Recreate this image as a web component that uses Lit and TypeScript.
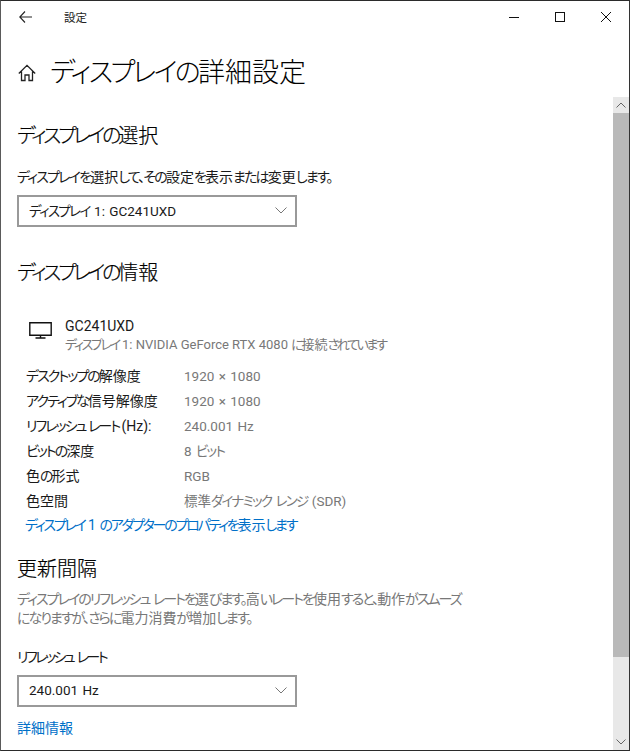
import { LitElement, css, html } from "lit";
import { customElement } from "lit/decorators.js";

const infoRows = [
  ["デスクトップの解像度", "1920 × 1080"],
  ["アクティブな信号解像度", "1920 × 1080"],
  ["リフレッシュ レート (Hz):", "240.001 Hz"],
  ["ビットの深度", "8 ビット"],
  ["色の形式", "RGB"],
  ["色空間", "標準ダイナミック レンジ (SDR)"],
];

// Yu Gothic UI has much narrower kana than Noto, so kana runs get tightened on their own
const jp = (text: string) =>
  text.split(/([\u3000-\u30ff]+)/).map((part, i) => (i % 2 ? html`<span class="k">${part}</span>` : part));

const chevron = html`<svg class="chev" width="12" height="7" viewBox="0 0 12 7">
  <path d="M.5.5 6 6 11.500.5" fill="none" stroke="#777" stroke-width="1" />
</svg>`;

@customElement("app-root")
export class AppRoot extends LitElement {
  override render() {
    return html`
      <div class="window">
        <header class="titlebar">
          <svg class="back" width="13" height="12" viewBox="0 0 13 12">
            <path d="M6 .5.8 6 6 11.500M.8 6H13" fill="none" stroke="#222" stroke-width="1.100" />
          </svg>
          <span class="app-name">設定</span>
          <div class="controls">
            <svg width="46" height="12" viewBox="0 0 46 12"><path d="M18 6.500h10" stroke="#111" stroke-width="1" /></svg>
            <svg width="46" height="12" viewBox="0 0 46 12"><rect x="18.500" y="1.500" width="9" height="9" fill="none" stroke="#111" stroke-width="1" /></svg>
            <svg width="46" height="12" viewBox="0 0 46 12"><path d="M18 1l10 10M28 1 18 11" stroke="#111" stroke-width="1" /></svg>
          </div>
        </header>

        <div class="body">
          <main class="content">
            <div class="page-title">
              <svg width="18" height="18" viewBox="0 0 18 18">
                <path d="M.8 9.500 9 1.300l8.200 8.200M3.500 7.500V16.500H7V11h4v5.500h3.500V7.500" fill="none" stroke="#222" stroke-width="1.300" />
              </svg>
              <h1>${jp("ディスプレイの詳細設定")}</h1>
            </div>

            <h2 class="first">${jp("ディスプレイの選択")}</h2>
            <p class="label">${jp("ディスプレイを選択して、その設定を表示または変更します。")}</p>
            <div class="select"><span>${jp("ディスプレイ 1: GC241UXD")}</span>${chevron}</div>

            <h2 class="info-head">${jp("ディスプレイの情報")}</h2>
            <div class="monitor">
              <svg width="23" height="17" viewBox="0 0 23 17">
                <path d="M.8.8h21.400v12.400H.8zM11.500 13.200v2.800M6.500 16h10" fill="none" stroke="#111" stroke-width="1.400" />
              </svg>
              <div>
                <div class="mon-name">GC241UXD</div>
                <div class="mon-sub">${jp("ディスプレイ 1: NVIDIA GeForce RTX 4080 に接続されています")}</div>
              </div>
            </div>
            <div class="rows">
              ${infoRows.map(
                ([k, v]) => html`<div class="row"><span class="key">${jp(k)}</span><span class="val">${jp(v)}</span></div>`,
              )}
            </div>
            <a class="link adapter">${jp("ディスプレイ 1 のアダプターのプロパティを表示します")}</a>

            <h2 class="rate-head">更新間隔</h2>
            <p class="desc">
              ${jp("ディスプレイのリフレッシュ レートを選びます。高いレートを使用すると、動作がスムーズ")}<br />
              ${jp("になりますが、さらに電力消費が増加します。")}
            </p>
            <p class="label rate-label">${jp("リフレッシュ レート")}</p>
            <div class="select"><span>240.001 Hz</span>${chevron}</div>
            <a class="link more">詳細情報</a>
          </main>

          <aside class="scrollbar">
            <div class="arrow">
              <svg width="10" height="6" viewBox="0 0 10 6"><path d="M.5 5.500 5 1l4.500 4.500" fill="none" stroke="#666" /></svg>
            </div>
            <div class="thumb"></div>
            <div class="track"></div>
            <div class="arrow">
              <svg width="10" height="6" viewBox="0 0 10 6"><path d="M.5.500 5 5 9.500.5" fill="none" stroke="#666" /></svg>
            </div>
          </aside>
        </div>
      </div>
    `;
  }

  static override styles = css`
    :host {
      display: block;
      width: 630px;
      height: 751px;
      font-family: Roboto, "Noto Sans CJK JP", sans-serif;
      font-feature-settings: "palt";
      font-size: 14px;
      color: #1a1a1a;
    }

    .k {
      letter-spacing: -0.13em;
    }

    .window {
      box-sizing: border-box;
      width: 630px;
      height: 751px;
      background: #fff;
      border-top: 1px solid #2b2b2b;
      border-left: 1px solid #5a5a5a;
      border-right: 1px solid #333;
      border-bottom: 1px solid #2b2b2b;
      display: flex;
      flex-direction: column;
      overflow: hidden;
    }

    .titlebar {
      flex: none;
      height: 32px;
      display: flex;
      align-items: center;
      padding-left: 18px;
    }

    .app-name {
      margin-left: 32px;
      font-size: 11.500px;
      color: #222;
    }

    .controls {
      margin-left: auto;
      display: flex;
    }

    .controls svg {
      display: block;
    }

    .body {
      flex: 1;
      min-height: 0;
      display: flex;
    }

    .content {
      flex: 1;
      min-width: 0;
      padding-left: 16px;
      overflow: hidden;
    }

    .page-title {
      display: flex;
      align-items: center;
      gap: 14px;
      margin-top: 22px;
      margin-left: 1px;
      height: 36px;
    }

    h1 {
      margin: 0;
      font-size: 27px;
      font-weight: 300;
      line-height: 36px;
      white-space: nowrap;
      color: #000;
    }

    h1 .k {
      letter-spacing: -0.1em;
    }

    h2 {
      margin: 0;
      font-size: 20px;
      font-weight: 300;
      line-height: 26px;
      color: #000;
      -webkit-text-stroke: 0.2px #000;
    }

    h2 .k {
      letter-spacing: -0.16em;
    }

    h2.first {
      margin-top: 32px;
    }

    .label {
      margin: 19px 0 0;
      line-height: 18px;
      white-space: nowrap;
    }

    .select {
      box-sizing: border-box;
      width: 280px;
      height: 32px;
      margin-top: 9px;
      border: 2px solid #999;
      display: flex;
      align-items: center;
      justify-content: space-between;
      padding: 0 8px 2px 10px;
      font-size: 13.500px;
      word-spacing: 1px;
    }

    .select .k {
      letter-spacing: -0.12em;
    }

    .chev {
      display: block;
    }

    .info-head {
      margin-top: 33px;
    }

    .monitor {
      display: flex;
      align-items: flex-start;
      gap: 13px;
      margin: 31px 0 0 12px;
    }

    .monitor svg {
      flex: none;
      margin-top: 5px;
    }

    .mon-name {
      line-height: 18px;
    }

    .mon-sub {
      font-size: 13px;
      line-height: 20px;
      color: #787878;
      white-space: nowrap;
    }

    .mon-sub .k {
      letter-spacing: -0.18em;
    }

    .rows {
      margin: 9px 0 0 9px;
    }

    .row {
      display: flex;
      align-items: baseline;
      line-height: 25px;
      height: 25px;
    }

    .key {
      width: 158px;
      white-space: nowrap;
      word-spacing: -1px;
    }

    .key .k {
      letter-spacing: -0.14em;
    }

    .val {
      color: #787878;
      white-space: nowrap;
      font-size: 13.500px;
      word-spacing: 1px;
    }

    .link {
      display: block;
      color: #0070c8;
      line-height: 18px;
      white-space: nowrap;
    }

    .link .k {
      letter-spacing: -0.16em;
    }

    .adapter {
      margin: 2px 0 0 8px;
    }

    .rate-head {
      margin-top: 22px;
    }

    .desc {
      margin: 8px 0 0;
      line-height: 19px;
      color: #787878;
      white-space: nowrap;
    }

    .desc .k {
      letter-spacing: -0.14em;
    }

    .rate-label {
      margin-top: 20px;
    }

    .rate-label .k {
      letter-spacing: -0.18em;
    }

    .more {
      margin-top: 12px;
    }

    .scrollbar {
      flex: none;
      width: 16px;
      margin-top: 64px;
      background: #e8e8e8;
      display: flex;
      flex-direction: column;
    }

    .arrow {
      flex: none;
      height: 16px;
      display: flex;
      align-items: center;
      justify-content: center;
    }

    .thumb {
      flex: none;
      height: 544px;
      background: #b9b9b9;
    }

    .track {
      flex: 1;
    }
  `;
}
